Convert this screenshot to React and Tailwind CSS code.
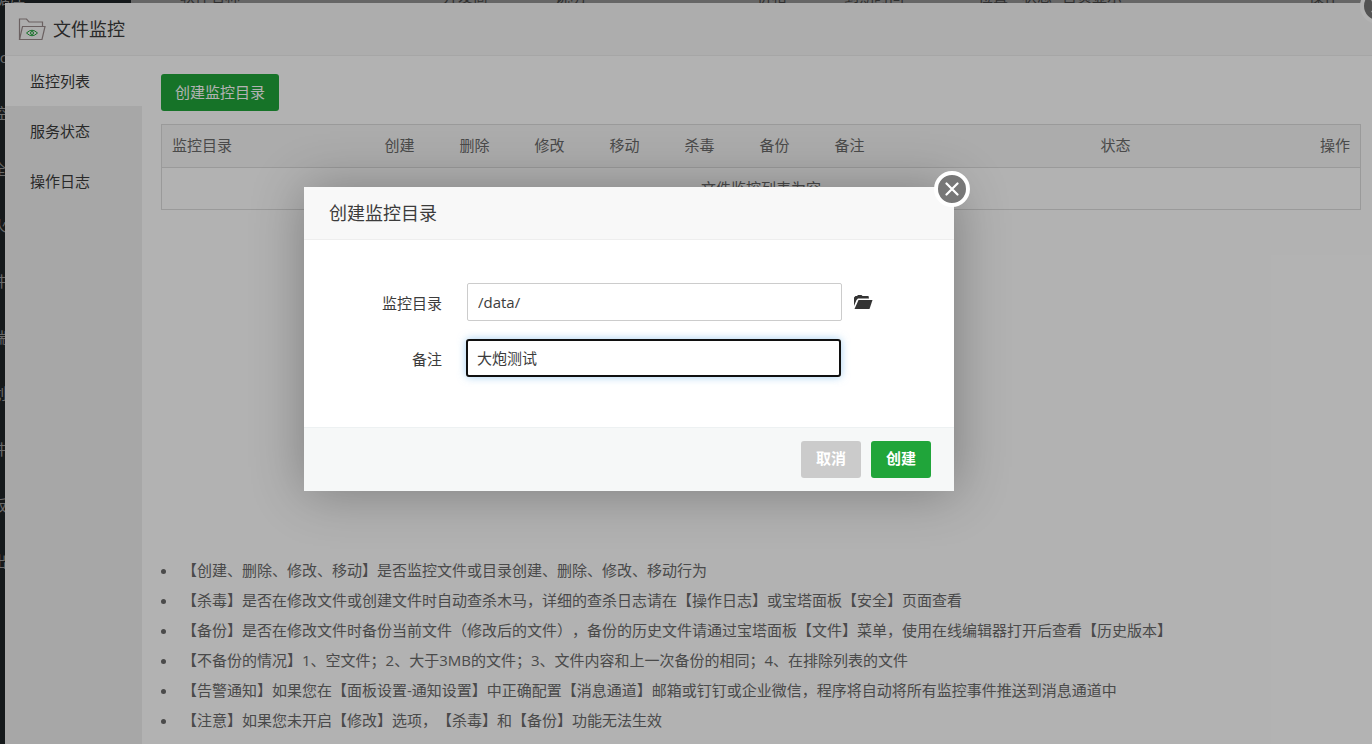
import { useState } from 'react';

// main menu of the panel, mostly covered by the plugin window
const menu = ['c', '控', '全', '火', '件', '端', '划', '件', '板', '出'];

// header row of the software list, only its lower edge shows above the window
const softColumns = [
    { name: '软件名称', width: 'w-[263px]' },
    { name: '开发商', width: 'w-[112px]' },
    { name: '说明', width: 'w-[202px]' },
    { name: '价格', width: 'w-[87px]' },
    { name: '到期时间', width: 'w-[134px]' },
    { name: '位置', width: 'w-[44px]' },
    { name: '状态', width: 'w-[40px]' },
    { name: '首页显示', width: 'w-[247px]' },
    { name: '操作', width: 'w-[40px]' },
];

const columns = [
    { name: '监控目录', width: 'w-[213px]' },
    { name: '创建', width: 'w-[75px]' },
    { name: '删除', width: 'w-[75px]' },
    { name: '修改', width: 'w-[75px]' },
    { name: '移动', width: 'w-[75px]' },
    { name: '杀毒', width: 'w-[75px]' },
    { name: '备份', width: 'w-[75px]' },
    { name: '备注', width: 'w-auto' },
    { name: '状态', width: 'w-[160px]' },
    { name: '操作', width: 'w-[110px] text-right' },
];

const tabs = ['监控列表', '服务状态', '操作日志'];

const tips = [
    '【创建、删除、修改、移动】是否监控文件或目录创建、删除、修改、移动行为',
    '【杀毒】是否在修改文件或创建文件时自动查杀木马，详细的查杀日志请在【操作日志】或宝塔面板【安全】页面查看',
    '【备份】是否在修改文件时备份当前文件（修改后的文件），备份的历史文件请通过宝塔面板【文件】菜单，使用在线编辑器打开后查看【历史版本】',
    '【不备份的情况】1、空文件；2、大于3MB的文件；3、文件内容和上一次备份的相同；4、在排除列表的文件',
    '【告警通知】如果您在【面板设置-通知设置】中正确配置【消息通道】邮箱或钉钉或企业微信，程序将自动将所有监控事件推送到消息通道中',
    '【注意】如果您未开启【修改】选项，【杀毒】和【备份】功能无法生效',
];

function FolderEyeIcon() {
    return (
        <svg width="28" height="24" viewBox="0 0 28 24" fill="none" stroke="#9a8c8c" strokeWidth="1.2">
            <path d="M1.500 22V2h7l2.500 3H24.500V9" />
            <path d="M1.500 22.500 4.500 9.500H27L24 22.500Z" />
            <path d="M8.500 16q5.500-5.500 11 0q-5.500 5.500-11 0Z" stroke="#20a53a" strokeWidth="1" />
            <circle cx="14" cy="16" r="1.500" stroke="#20a53a" strokeWidth="1" />
        </svg>
    );
}

function FolderOpenIcon() {
    return (
        <svg width="20" height="16" viewBox="0 0 20 16" fill="#333">
            <path d="M1 12V3.500L2.500 2H4L5 1H8.500L9.500 2H15.500L16 4.500H5L3.500 6Z" />
            <path d="M5.500 6H19.500L16.500 15H1.500Z" />
        </svg>
    );
}

function CloseIcon() {
    return (
        <svg width="14" height="14" viewBox="0 0 14 14" fill="none" stroke="currentColor" strokeWidth="2.200" strokeLinecap="round">
            <path d="M1.500 1.500 12.500 12.500M12.500 1.500 1.500 12.500" />
        </svg>
    );
}

export default function App() {
    const [activeTab, setActiveTab] = useState('监控列表');
    const [path, setPath] = useState('/data/');
    const [remark, setRemark] = useState('大炮测试');

    return (
        <div className="relative flex h-screen overflow-hidden bg-[#929292] font-['Open_Sans','Noto_Sans_CJK_SC',sans-serif] text-[15px] text-[#3c3c3c] [text-spacing-trim:space-all]">
            {/* page behind the window */}
            <aside className="w-[131px] shrink-0 bg-[#1f2428] text-[#999]">
                <div className="-ml-[5px] flow-root h-[29px] leading-none"><div className="-mt-[9px]">据库</div></div>
                {menu.map((item, i) => (
                    <div key={i} className="-ml-2 h-14 w-[15px] text-right leading-[56px]">{item}</div>
                ))}
            </aside>
            <div className="-mt-[11px] flex pl-[49px] leading-none text-[#444]">
                {softColumns.map((col) => (
                    <div key={col.name} className={`shrink-0 whitespace-nowrap ${col.width}`}>{col.name}</div>
                ))}
            </div>

            {/* plugin window */}
            <main className="absolute inset-0 top-[3px] left-[5px] flex flex-col bg-white">
                <header className="flex h-[53px] shrink-0 items-center gap-[7px] border-b border-[#eee] bg-[#f8f8f8] pl-[13px]">
                    <FolderEyeIcon />
                    <h1 className="text-[18px]">文件监控</h1>
                </header>
                <div className="flex min-h-0 flex-1">
                    <nav className="w-[137px] shrink-0 bg-[#f0f0f0]">
                        {tabs.map((tab) => (
                            <button
                                key={tab}
                                type="button"
                                onClick={() => setActiveTab(tab)}
                                className={`block h-[50px] w-full pl-[25px] text-left ${activeTab === tab ? 'bg-white' : ''}`}
                            >
                                {tab}
                            </button>
                        ))}
                    </nav>
                    <section className="flex min-w-0 flex-1 flex-col justify-between pt-[18px] pr-[11px] pb-[9px] pl-[19px]">
                        <div>
                            <button type="button" className="h-[37px] rounded-[3px] bg-[#20a53a] px-[14px] text-white">创建监控目录</button>
                            <table className="mt-[13px] w-full table-fixed border-collapse border border-[#ddd] text-[#6a6a6a]">
                                <thead>
                                    <tr className="h-[43px] border-b border-[#ddd] bg-[#f6f6f6]">
                                        {columns.map((col) => (
                                            <th key={col.name} className={`px-[10px] pb-[2px] text-left font-normal ${col.width}`}>{col.name}</th>
                                        ))}
                                    </tr>
                                </thead>
                                <tbody>
                                    <tr className="h-[42px]">
                                        <td colSpan={10} className="text-center">文件监控列表为空</td>
                                    </tr>
                                </tbody>
                            </table>
                        </div>
                        <ul className="list-disc pl-[17px] leading-[30px] text-[#6a6a6a]">
                            {tips.map((tip) => (
                                <li key={tip} className="pl-1">{tip}</li>
                            ))}
                        </ul>
                    </section>
                </div>
                <button type="button" aria-label="关闭窗口" className="absolute -top-[15px] -right-6 flex size-9 items-center justify-center rounded-full border-4 border-white bg-[#777] text-white">
                    <CloseIcon />
                </button>
            </main>

            {/* mask and dialog */}
            <div className="absolute inset-0 bg-black/30 pt-[187px] pl-[304px]">
                <form role="dialog" aria-label="创建监控目录" className="relative w-[650px] max-w-full bg-white shadow-[1px_1px_50px_rgba(0,0,0,0.3)]">
                    <h2 className="h-[53px] border-b border-[#eee] bg-[#f8f8f8] pl-[25px] text-[18px] leading-[53px]">创建监控目录</h2>
                    <div className="flex h-[187px] flex-col gap-[18px] pt-[43px]">
                        <div className="flex items-center">
                            <label htmlFor="path" className="w-[138px] pt-[3px] text-right">监控目录</label>
                            <input id="path" type="text" value={path} onChange={(e) => setPath(e.target.value)} className="ml-[25px] h-[38px] w-[375px] rounded-xs border border-[#ccc] px-[10px] outline-none" />
                            <button type="button" aria-label="选择目录" className="ml-[11px]">
                                <FolderOpenIcon />
                            </button>
                        </div>
                        <div className="flex items-center">
                            <label htmlFor="remark" className="w-[138px] pt-[3px] text-right">备注</label>
                            <input id="remark" type="text" value={remark} onChange={(e) => setRemark(e.target.value)} className="ml-6 h-[38px] w-[375px] rounded-[3px] border-2 border-[#101010] px-[9px] pb-[2px] shadow-[0_0_8px_rgba(102,175,233,0.6)] outline-none" />
                        </div>
                    </div>
                    <footer className="flex h-16 items-center justify-end gap-[10px] border-t border-[#edf1f2] bg-[#f6f8f8] pr-[23px] font-bold text-white">
                        <button type="button" className="h-[37px] w-[60px] rounded-[3px] bg-[#cbcbcb] pb-[2px]">取消</button>
                        <button type="submit" className="h-[37px] w-[60px] rounded-[3px] bg-[#20a53a] pb-[2px]">创建</button>
                    </footer>
                    <button type="button" aria-label="关闭" className="absolute -top-4 -right-4 flex size-9 items-center justify-center rounded-full border-4 border-white bg-[#777] text-white">
                        <CloseIcon />
                    </button>
                </form>
            </div>
        </div>
    );
}
